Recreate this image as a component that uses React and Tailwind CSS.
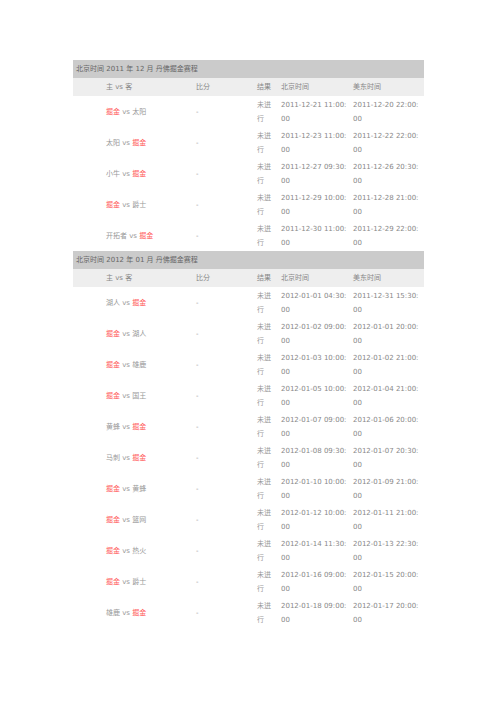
const CJK = { fontFamily: '"DejaVu Sans", "Noto Sans CJK SC", sans-serif' }

const dec = [
  ['掘金', '太阳', 'h', '2011-12-21 11:00:', '2011-12-20 22:00:'],
  ['太阳', '掘金', 'a', '2011-12-23 11:00:', '2011-12-22 22:00:'],
  ['小牛', '掘金', 'a', '2011-12-27 09:30:', '2011-12-26 20:30:'],
  ['掘金', '爵士', 'h', '2011-12-29 10:00:', '2011-12-28 21:00:'],
  ['开拓者', '掘金', 'a', '2011-12-30 11:00:', '2011-12-29 22:00:'],
]

const jan = [
  ['湖人', '掘金', 'a', '2012-01-01 04:30:', '2011-12-31 15:30:'],
  ['掘金', '湖人', 'h', '2012-01-02 09:00:', '2012-01-01 20:00:'],
  ['掘金', '雄鹿', 'h', '2012-01-03 10:00:', '2012-01-02 21:00:'],
  ['掘金', '国王', 'h', '2012-01-05 10:00:', '2012-01-04 21:00:'],
  ['黄蜂', '掘金', 'a', '2012-01-07 09:00:', '2012-01-06 20:00:'],
  ['马刺', '掘金', 'a', '2012-01-08 09:30:', '2012-01-07 20:30:'],
  ['掘金', '黄蜂', 'h', '2012-01-10 10:00:', '2012-01-09 21:00:'],
  ['掘金', '篮网', 'h', '2012-01-12 10:00:', '2012-01-11 21:00:'],
  ['掘金', '热火', 'h', '2012-01-14 11:30:', '2012-01-13 22:30:'],
  ['掘金', '爵士', 'h', '2012-01-16 09:00:', '2012-01-15 20:00:'],
  ['雄鹿', '掘金', 'a', '2012-01-18 09:00:', '2012-01-17 20:00:'],
]

const cols = 'grid grid-cols-[123px_61px_24px_72px_71px]'

function Section({ title, rows }) {
  return (
    <div>
      <div className="flex h-[18px] items-center bg-[#cbcbcb] pl-[3px] text-[7px] text-[#666]">
        {title}
      </div>
      <div className={`${cols} h-[18px] items-center bg-[#eeeeee] text-[7px] text-[#888]`}>
        <div className="pl-[33px]">主 vs 客</div>
        <div>比分</div>
        <div>结果</div>
        <div>北京时间</div>
        <div>美东时间</div>
      </div>
      {rows.map(([home, away, side, bj, et], i) => (
        <div key={i} className={`${cols} h-[31px] items-center text-[7px] leading-[14px] text-[#999]`}>
          <div className="pl-[33px]">
            <span className={side === 'h' ? 'text-[#ff5a5a]' : ''}>{home}</span>
            {' vs '}
            <span className={side === 'a' ? 'text-[#ff5a5a]' : ''}>{away}</span>
          </div>
          <div>-</div>
          <div>未进<br />行</div>
          <div className="text-[#888]">{bj}<br />00</div>
          <div className="text-[#888]">{et}<br />00</div>
        </div>
      ))}
    </div>
  )
}

export default function App() {
  return (
    <div className="min-h-[702px] w-[496px] bg-white pl-[73px] pt-[60px]" style={CJK}>
      <div className="w-[351px]">
        <Section title="北京时间 2011 年 12 月 丹佛掘金赛程" rows={dec} />
        <Section title="北京时间 2012 年 01 月 丹佛掘金赛程" rows={jan} />
      </div>
    </div>
  )
}
